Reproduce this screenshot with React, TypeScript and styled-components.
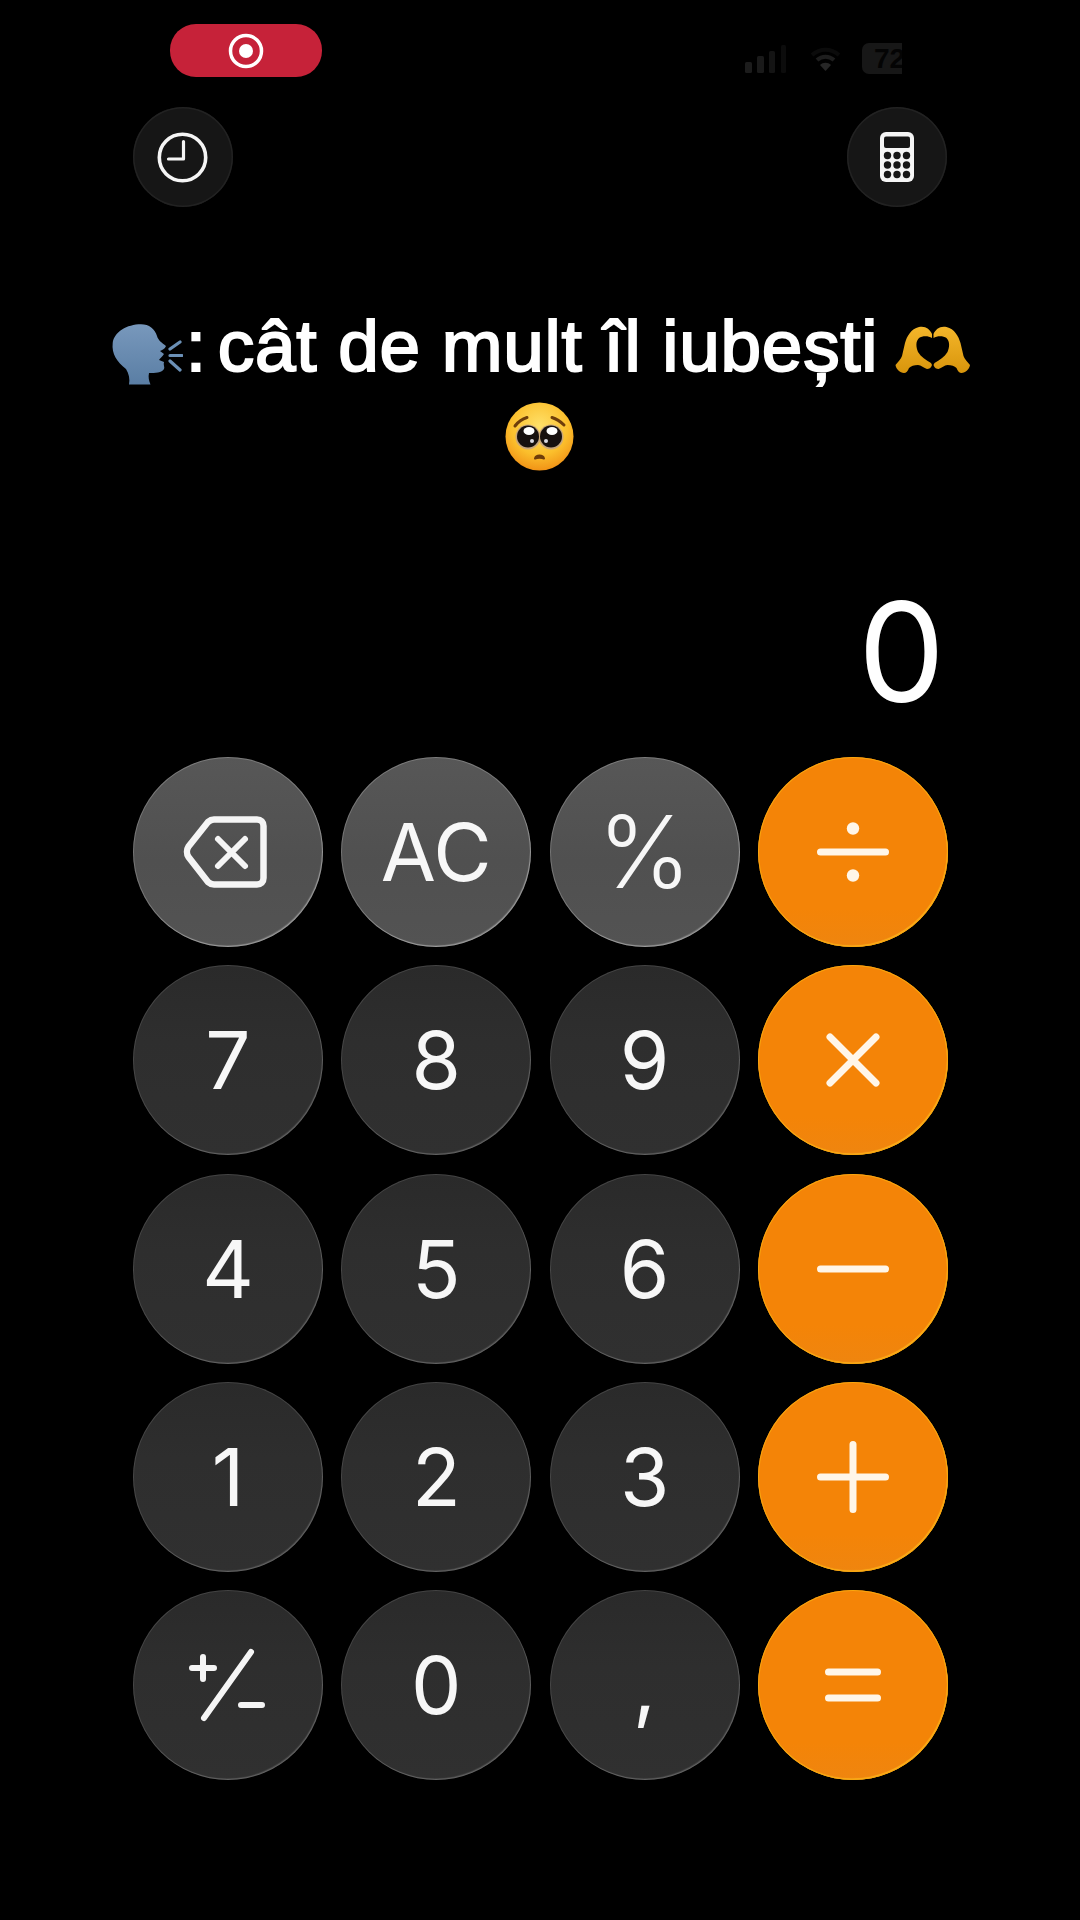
import React from "react";
import styled, { createGlobalStyle } from "styled-components";

const GlobalStyle = createGlobalStyle`
  html, body {
    margin: 0;
    padding: 0;
    background: #000;
  }
`;

const Screen = styled.div`
  width: 1080px;
  height: 1920px;
  background: #000;
  overflow: hidden;
  display: flex;
  flex-direction: column;
  font-family: Inter, "Liberation Sans", sans-serif;
  color: #f5f5f5;
`;

const StatusBar = styled.div`
  height: 53px;
  margin-top: 24px;
  padding: 0 178px 0 170px;
  display: flex;
  align-items: center;
  justify-content: space-between;
`;

const RecordPill = styled.div`
  width: 152px;
  height: 53px;
  border-radius: 26px;
  background: #c62239;
  display: flex;
  align-items: center;
  justify-content: center;
`;

const StatusIcons = styled.div`
  display: flex;
  align-items: center;
  gap: 21px;
  margin-top: 16px;
`;

const Battery = styled.div`
  width: 40px;
  height: 31px;
  border-radius: 7px 0 0 7px;
  background: #171717;
  color: #040404;
  font-family: "Liberation Sans", sans-serif;
  font-size: 28px;
  font-weight: 700;
  line-height: 31px;
  overflow: hidden;
  padding-left: 12px;
  box-sizing: border-box;
  white-space: nowrap;
`;

const TopRow = styled.div`
  margin-top: 30px;
  padding: 0 133px;
  display: flex;
  justify-content: space-between;
`;

const RoundIcon = styled.div`
  width: 100px;
  height: 100px;
  border-radius: 50%;
  background: #161616;
  box-shadow: inset 0 0 0 1.5px #222;
  display: flex;
  align-items: center;
  justify-content: center;
`;

const Title = styled.h1`
  margin: 91px 0 0;
  padding: 0 100px;
  text-align: center;
  font-family: "Liberation Sans", Arial, sans-serif;
  font-size: 73px;
  font-weight: 400;
  letter-spacing: 0.7px;
  line-height: 95px;
  color: #fff;
  -webkit-text-stroke: 2px #fff;
`;

const Colon = styled.span`
  margin-left: 3px;
  word-spacing: -10px;
`;

const Emoji = styled.svg<{ $drop: number; $shift?: number }>`
  vertical-align: ${({ $drop }) => -$drop}px;
  margin-left: ${({ $shift }) => $shift ?? 0}px;
`;

const Display = styled.div`
  margin-top: 91px;
  padding-right: 135px;
  text-align: right;
  font-size: 138px;
  font-weight: 400;
  line-height: 146px;
  color: #fff;
`;

const Keypad = styled.div`
  margin-top: 32px;
  padding: 0 132px 0 133px;
  display: grid;
  grid-template-columns: repeat(4, 190px);
  grid-auto-rows: 190px;
  gap: 18.3px;
`;

type KeyKind = "func" | "digit" | "op";

const Key = styled.div<{ $kind: KeyKind }>`
  width: 190px;
  height: 190px;
  border-radius: 50%;
  display: flex;
  align-items: center;
  justify-content: center;
  font-size: 80px;
  font-weight: 385;
  line-height: 1;
  color: #f7f7f7;
  background: ${({ $kind }) =>
    $kind === "func"
      ? "linear-gradient(180deg, #575757, #505050 55%, #535353)"
      : $kind === "op"
        ? "linear-gradient(180deg, #f48407, #f48407 80%, #ef850f)"
        : "linear-gradient(180deg, #2a2a2a, #2e2e2e 40%, #303030)"};
  box-shadow: ${({ $kind }) =>
    $kind === "func"
      ? "inset 0 0 0 1px rgba(255,255,255,0.22), inset -1px -1.5px 1px rgba(255,255,255,0.25)"
      : $kind === "op"
        ? "inset 0 0 0 1px #f9a60f, inset -1px -1.5px 1px rgba(255,196,40,0.7)"
        : "inset 0 0 0 1px rgba(255,255,255,0.12), inset -1px -1.5px 1px rgba(255,255,255,0.14)"};
`;

const PercentMark = styled.span`
  font-size: 100px;
  font-weight: 360;
`;

const BackspaceSvg = styled.svg`
  margin-left: -7px;
`;

const SignalIcon = () => (
  <svg width="44" height="28" viewBox="0 0 44 28">
    <rect x="0" y="17" width="7" height="11" rx="1.5" fill="#1c1c1c" />
    <rect x="12" y="11" width="7" height="17" rx="1.5" fill="#1a1a1a" />
    <rect x="24" y="6" width="6" height="22" rx="1.5" fill="#141414" />
    <rect x="36" y="0" width="5" height="28" rx="1.5" fill="#0c0c0c" />
  </svg>
);

const WifiIcon = () => (
  <svg width="31" height="24" viewBox="0 0 31 24" fill="none">
    <path d="M2 8C10 1 21 1 29 8" stroke="#0b0b0b" strokeWidth="4" />
    <path d="M7 13C12 8.5 19 8.5 24 13" stroke="#1e1e1e" strokeWidth="4" />
    <path d="M15.5 24L10 18C13 15 18 15 21 18Z" fill="#262626" />
  </svg>
);

const RecordIcon = () => (
  <svg width="36" height="36" viewBox="0 0 36 36">
    <circle cx="18" cy="18" r="15.5" fill="none" stroke="#fff" strokeWidth="3.5" />
    <circle cx="18" cy="18" r="7" fill="#fff" />
  </svg>
);

const ClockIcon = () => (
  <svg width="52" height="52" viewBox="0 0 52 52" fill="none">
    <circle cx="25.5" cy="26.5" r="23.2" stroke="#f5f5f5" strokeWidth="3.6" />
    <path
      d="M26.5 10.5V28H11.5"
      stroke="#f5f5f5"
      strokeWidth="3.2"
      strokeLinecap="round"
      strokeLinejoin="round"
    />
  </svg>
);

const CalculatorIcon = () => (
  <svg width="36" height="52" viewBox="0 0 36 52">
    <rect x="1" y="1" width="34" height="50" rx="6" fill="#f5f5f5" />
    <rect x="5" y="5.5" width="26" height="11.5" rx="2" fill="#161616" />
    {[24.5, 34, 43.5].map((cy) =>
      [8.5, 18, 27.5].map((cx) => (
        <circle key={`${cx}-${cy}`} cx={cx} cy={cy} r="3.7" fill="#161616" />
      ))
    )}
  </svg>
);

const BackspaceIcon = () => (
  <BackspaceSvg width="84" height="72" viewBox="0 0 84 72" fill="none">
    <path
      d="M31 3.5H74C78 3.5 80.5 6 80.5 10V62C80.5 66 78 68.5 74 68.5H31C28.5 68.5 27 67.8 25 66L5.5 41C3.5 38 3.5 33.5 5.5 30.5L25 6C27 4.2 28.5 3.5 31 3.5Z"
      stroke="#f5f5f5"
      strokeWidth="6.5"
      strokeLinejoin="round"
    />
    <path
      d="M35 23L62 50M62 23L35 50"
      stroke="#f5f5f5"
      strokeWidth="6"
      strokeLinecap="round"
    />
  </BackspaceSvg>
);

const OpIcon = ({ children }: { children: React.ReactNode }) => (
  <svg
    width="72"
    height="72"
    viewBox="0 0 72 72"
    fill="none"
    stroke="#fff6e8"
    strokeWidth="7"
    strokeLinecap="round"
  >
    {children}
  </svg>
);

const PlusMinusIcon = () => (
  <svg
    width="80"
    height="76"
    viewBox="0 0 80 76"
    fill="none"
    stroke="#f5f5f5"
    strokeWidth="6"
    strokeLinecap="round"
  >
    <path d="M4 21H26M15 10V32M63 5L16 71M53 58H74" />
  </svg>
);

const SpeakingHead = () => (
  <Emoji $drop={15} width="74" height="62" viewBox="0 0 74 62">
    <defs>
      <linearGradient id="headFill" x1="0" y1="0" x2="0" y2="1">
        <stop offset="0" stopColor="#7898bc" />
        <stop offset="1" stopColor="#5a7ea4" />
      </linearGradient>
    </defs>
    <path
      d="M3.7 19C5 8 18 0.3 32 0.3C40 0.3 46 5 48 12C49 16 53 19 57 22C56 25 53 26 51 27L55 30C53 33 51 34 50 36L55 38C54 41 56 43 55 45C53 49 46 49 40 49C39 53 40 57 41.5 60.5H20C21 55 20 50 17 45C8 38 2.5 30 3.7 19Z"
      fill="url(#headFill)"
      stroke="none"
    />
    <path
      d="M61 25L71 18M61 31.5H73M61 37L71 46"
      stroke="#6b90b6"
      strokeWidth="3.2"
      strokeLinecap="round"
    />
  </Emoji>
);

const HeartHand = () => (
  <path d="M10 17C12 10 16 3 24 1C30 -0.5 35 3 37 8L37 12C33 9.5 27 10 24 12C21 15 20.5 20 23 26C26 31 31 34 36 37L37 39C36 42 34 43 32 43C29 42 26 39 23 39C19 39 16 40 14 42C13 45 11 47 9 47C5 47 1 43 0.5 39C3 36 6 33 7 30Z" />
);

const HeartHands = () => (
  <Emoji $drop={3} $shift={-4} width="76" height="48" viewBox="0 0 76 48">
    <defs>
      <linearGradient id="handFill" x1="0" y1="0" x2="0" y2="1">
        <stop offset="0" stopColor="#f4b62a" />
        <stop offset="1" stopColor="#d8950c" />
      </linearGradient>
    </defs>
    <g fill="url(#handFill)" stroke="none">
      <HeartHand />
      <g transform="translate(75.5 0) scale(-1 1)">
        <HeartHand />
      </g>
    </g>
  </Emoji>
);

const PleadingFace = () => (
  <Emoji $drop={6} width="70" height="70" viewBox="0 0 70 70">
    <defs>
      <radialGradient id="faceFill" cx="0.5" cy="0.35" r="0.7">
        <stop offset="0" stopColor="#ffe16a" />
        <stop offset="0.6" stopColor="#fbbf2c" />
        <stop offset="1" stopColor="#ef8a12" />
      </radialGradient>
    </defs>
    <g stroke="none">
      <circle cx="34.5" cy="34.5" r="34" fill="url(#faceFill)" />
      <circle cx="23" cy="35" r="12.5" fill="#c9a77a" />
      <circle cx="46" cy="35" r="12.5" fill="#c9a77a" />
      <circle cx="23" cy="34.5" r="11" fill="#17110f" />
      <circle cx="46" cy="34.5" r="11" fill="#17110f" />
      <ellipse cx="24" cy="29" rx="5.5" ry="4" fill="#fff" />
      <ellipse cx="47" cy="29" rx="5.5" ry="4" fill="#fff" />
      <circle cx="27" cy="39" r="2" fill="#d8d8e0" />
      <circle cx="41" cy="39" r="2" fill="#d8d8e0" />
    </g>
    <path
      d="M10 24C13 20 17 17 22 15.5M47 15.5C52 17 56 20 59 23"
      stroke="#6e3d0a"
      strokeWidth="3"
      fill="none"
      strokeLinecap="round"
    />
    <path
      d="M30 56.5C31 52.5 38 52.5 39 56.5C37 55.5 32 55.5 30 56.5Z"
      fill="#6e3d0a"
      stroke="#6e3d0a"
      strokeWidth="2"
      strokeLinejoin="round"
    />
  </Emoji>
);

const digitRows = [
  ["7", "8", "9"],
  ["4", "5", "6"],
  ["1", "2", "3"],
];

const opIcons = [
  <>
    <path d="M3.5 36H68.5" />
    <circle cx="36" cy="12.5" r="6.2" fill="#fff6e8" stroke="none" />
    <circle cx="36" cy="59.5" r="6.2" fill="#fff6e8" stroke="none" />
  </>,
  <path d="M13 13L59 59M59 13L13 59" />,
  <path d="M3.5 36H68.5" />,
  <path d="M3.5 36H68.5M36 3.5V68.5" />,
  <path d="M11.5 23H60.5M11.5 49H60.5" />,
];

const App = () => (
  <Screen>
    <GlobalStyle />
    <StatusBar>
      <RecordPill>
        <RecordIcon />
      </RecordPill>
      <StatusIcons>
        <SignalIcon />
        <WifiIcon />
        <Battery>72</Battery>
      </StatusIcons>
    </StatusBar>
    <TopRow>
      <RoundIcon>
        <ClockIcon />
      </RoundIcon>
      <RoundIcon>
        <CalculatorIcon />
      </RoundIcon>
    </TopRow>
    <Title>
      <SpeakingHead />
      <Colon>: </Colon>cât de mult îl iubești <HeartHands /> <PleadingFace />
    </Title>
    <Display>0</Display>
    <Keypad>
      <Key $kind="func">
        <BackspaceIcon />
      </Key>
      <Key $kind="func">AC</Key>
      <Key $kind="func">
        <PercentMark>%</PercentMark>
      </Key>
      <Key $kind="op">
        <OpIcon>{opIcons[0]}</OpIcon>
      </Key>
      {digitRows.map((row, i) => (
        <React.Fragment key={row[0]}>
          {row.map((digit) => (
            <Key $kind="digit" key={digit}>
              {digit}
            </Key>
          ))}
          <Key $kind="op">
            <OpIcon>{opIcons[i + 1]}</OpIcon>
          </Key>
        </React.Fragment>
      ))}
      <Key $kind="digit">
        <PlusMinusIcon />
      </Key>
      <Key $kind="digit">0</Key>
      <Key $kind="digit">,</Key>
      <Key $kind="op">
        <OpIcon>{opIcons[4]}</OpIcon>
      </Key>
    </Keypad>
  </Screen>
);

export default App;
